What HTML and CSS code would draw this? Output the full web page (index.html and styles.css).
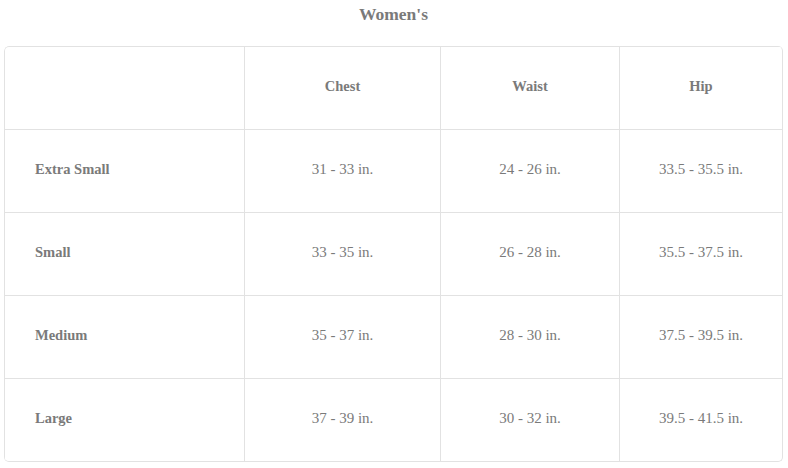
FILE: index.html
```html
<!DOCTYPE html>
<html>
<head>
<meta charset="utf-8">
<link rel="stylesheet" href="styles.css">
</head>
<body>
<h2 class="title">Women's</h2>
<div class="chart">
  <div class="cell head"></div>
  <div class="cell head center">Chest</div>
  <div class="cell head center">Waist</div>
  <div class="cell head center">Hip</div>

  <div class="cell label">Extra Small</div>
  <div class="cell center">31 - 33 in.</div>
  <div class="cell center">24 - 26 in.</div>
  <div class="cell center">33.5 - 35.5 in.</div>

  <div class="cell label">Small</div>
  <div class="cell center">33 - 35 in.</div>
  <div class="cell center">26 - 28 in.</div>
  <div class="cell center">35.5 - 37.5 in.</div>

  <div class="cell label">Medium</div>
  <div class="cell center">35 - 37 in.</div>
  <div class="cell center">28 - 30 in.</div>
  <div class="cell center">37.5 - 39.5 in.</div>

  <div class="cell label">Large</div>
  <div class="cell center">37 - 39 in.</div>
  <div class="cell center">30 - 32 in.</div>
  <div class="cell center">39.5 - 41.5 in.</div>
</div>
</body>
</html>
```
FILE: styles.css
```css
html, body {
  margin: 0;
  padding: 0;
  background: #ffffff;
}
body {
  font-family: "Liberation Serif", "DejaVu Serif", serif;
  color: #777777;
  padding: 0 5px 0 4px;
}
.title {
  margin: 0;
  height: 46px;
  padding-top: 4px;
  box-sizing: border-box;
  font-size: 17.5px;
  font-weight: bold;
  text-align: center;
  color: #7a7a7a;
}
.chart {
  display: grid;
  grid-template-columns: 240px 196px 179px 163px;
  grid-auto-rows: 83px;
  border: 1px solid #e2e2e2;
  border-top: 0;
  border-left: 0;
  border-radius: 5px;
  width: 778px;
  overflow: hidden;
}
.cell {
  display: flex;
  align-items: center;
  border-left: 1px solid #e2e2e2;
  border-top: 1px solid #e2e2e2;
  padding-bottom: 3px;
  font-size: 15px;
  color: #7a7a7a;
}
.chart .cell:first-child {
  border-top-left-radius: 5px;
}
.center {
  justify-content: center;
}
.head {
  font-weight: bold;
  font-size: 14.5px;
}
.label {
  font-weight: bold;
  font-size: 14.5px;
  padding-left: 30px;
}
```
